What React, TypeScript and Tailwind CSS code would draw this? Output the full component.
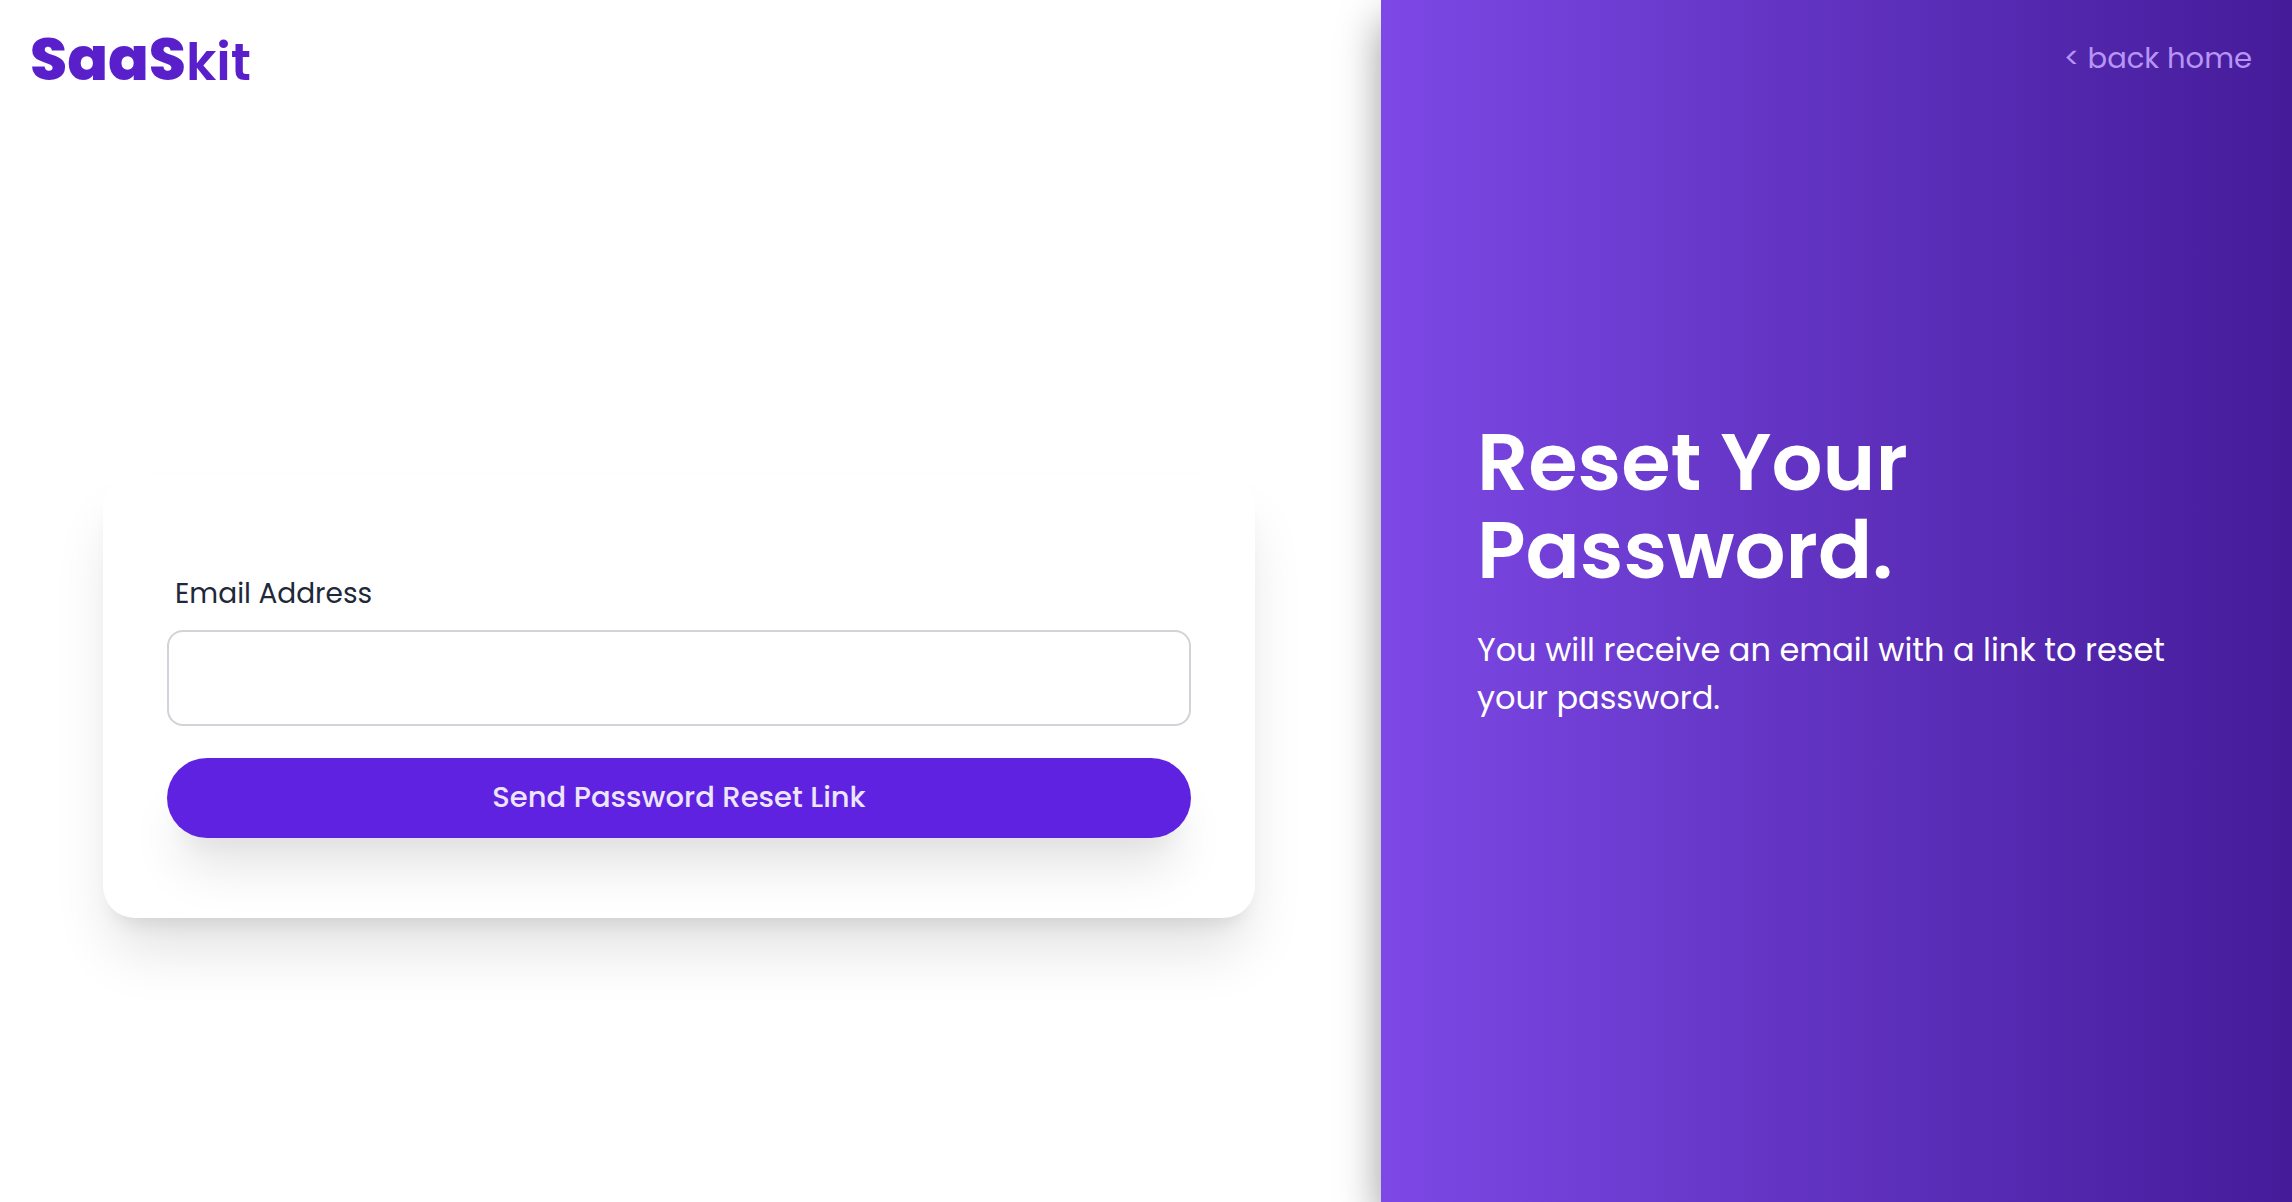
export default function App() {
  return (
    <div className="flex min-h-screen bg-white font-['Poppins',Inter,sans-serif]">
      <main className="flex flex-1 flex-col">
        <header className="flex h-[118px] items-center px-[30px]">
          <a href="#" className="flex items-baseline text-[#581fcb]">
            <span className="text-[60px] font-extrabold">SaaS</span>
            <span className="text-[52px] font-semibold">kit</span>
          </a>
        </header>
        <section className="flex flex-1 items-center pr-[126px] pl-[103px] pt-[72px]">
          <form
            className="w-full rounded-[32px] bg-white px-16 pt-24 pb-20 shadow-[0_40px_60px_-10px_rgba(0,0,0,0.12),0_16px_20px_-12px_rgba(0,0,0,0.1)]"
            onSubmit={(e) => e.preventDefault()}
          >
            <label htmlFor="email" className="block px-2 text-[28px] leading-12 text-gray-800">
              Email Address
            </label>
            <input
              id="email"
              type="email"
              className="mt-3 block h-24 w-full rounded-2xl border-2 border-[#d2d3d8] bg-white px-6 text-[28px] text-gray-800"
            />
            <button
              type="submit"
              className="mt-8 block h-20 w-full rounded-full bg-[#5f22e1] text-[29px] font-medium text-[#ede5fd] shadow-[0_40px_50px_-10px_rgba(0,0,0,0.1),0_20px_20px_-10px_rgba(0,0,0,0.04)]"
            >
              Send Password Reset Link
            </button>
          </form>
        </section>
      </main>
      <aside className="flex w-[39.75%] flex-col bg-linear-to-r from-[#7d48e6] to-[#451b9a] text-white shadow-[0_20px_40px_rgba(0,0,0,0.4)]">
        <nav className="flex h-[118px] items-center justify-end px-10">
          <a href="#" className="text-[29px] text-[#b795f5]">
            &lt; back home
          </a>
        </nav>
        <div className="flex flex-1 flex-col justify-center px-24 pb-[180px]">
          <h1 className="text-[80px] leading-[88px] font-semibold">Reset Your Password.</h1>
          <p className="mt-8 text-[32px] leading-12">You will receive an email with a link to reset your password.</p>
        </div>
      </aside>
    </div>
  );
}
